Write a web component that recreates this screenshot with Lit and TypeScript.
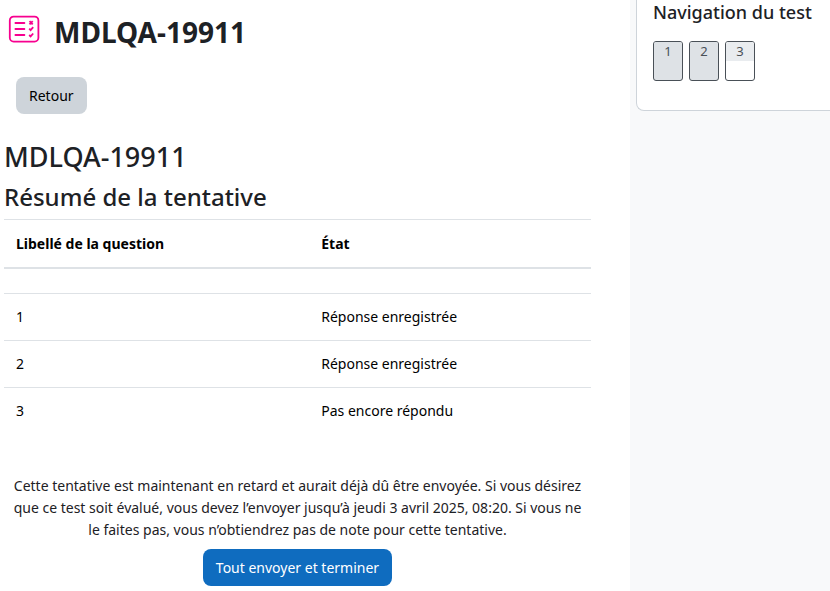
import { LitElement, html, css } from "lit";
import { customElement, state } from "lit/decorators.js";
import { classMap } from "lit/directives/class-map.js";

interface Question {
  number: number;
  answered: boolean;
}

@customElement("app-root")
export class AppRoot extends LitElement {
  static styles = css`
    :host {
      display: block;
      font-family: "Noto Sans", "Open Sans", sans-serif;
      font-size: 14px;
      line-height: 22px;
      color: #1d2125;
    }
    * {
      box-sizing: border-box;
    }
    .page {
      display: grid;
      grid-template-columns: minmax(0, 1fr) 200px;
      min-height: 100vh;
      background: #fff;
    }
    .main {
      padding: 12px 39px 5px 4px;
    }
    .title-bar {
      display: flex;
      align-items: center;
      gap: 14px;
      padding-left: 4px;
    }
    .icon {
      width: 32px;
      height: 28px;
      flex: none;
      margin-bottom: 6px;
    }
    h1,
    h2,
    h3,
    p {
      margin: 0;
    }
    h1 {
      font-size: 28px;
      line-height: 40px;
      font-weight: 700;
    }
    .btn {
      font: inherit;
      height: 37px;
      padding: 0 13px;
      border: 0;
      border-radius: 8px;
      white-space: nowrap;
      cursor: pointer;
    }
    .back {
      display: block;
      margin: 25px 12px;
      background: #ced4da;
      color: #000;
    }
    h2 {
      font-size: 27px;
      line-height: 36px;
      font-weight: 500;
    }
    h3 {
      font-size: 24px;
      line-height: 32px;
      font-weight: 500;
      margin: 6px 0;
    }
    table {
      width: 100%;
      table-layout: fixed;
      border-collapse: separate;
      border-spacing: 0;
      color: #000;
    }
    th,
    td {
      padding: 0 12px;
      text-align: left;
      vertical-align: middle;
    }
    td {
      border-top: 1px solid #dee2e6;
      height: 47px;
    }
    th {
      height: 50px;
      border-top: 1px solid #dee2e6;
      border-bottom: 2px solid #dee2e6;
      font-weight: 700;
    }
    .first {
      width: 52%;
    }
    .spacer td {
      height: 24px;
      border-top: 0;
    }
    .submit {
      display: flex;
      flex-direction: column;
      align-items: center;
      gap: 8px;
      margin-top: 41px;
      padding: 0 4px;
      text-align: center;
    }
    .primary {
      background: #0f6cbf;
      color: #fff;
    }
    .side {
      background: #f8f9fa;
      padding-left: 6px;
    }
    .card {
      padding: 0 0 29px 16px;
      background: #fff;
      border: 1px solid #ced4da;
      border-width: 0 0 1px 1px;
      border-bottom-left-radius: 8px;
    }
    .card h2 {
      font-size: 18px;
      line-height: 25px;
      white-space: nowrap;
    }
    .questions {
      display: flex;
      gap: 6px;
      margin-top: 16px;
    }
    .question {
      width: 30px;
      height: 40px;
      border: 1px solid #495057;
      border-radius: 3px;
      overflow: hidden;
      background: #fff;
      color: #495057;
      font-size: 13px;
      line-height: 19px;
      text-align: center;
      text-decoration: none;
    }
    .number {
      display: block;
      height: 19px;
      background: #e9ecef;
    }
    .answered,
    .answered .number {
      background: #dee2e6;
    }
  `;

  @state()
  private questions: Question[] = [
    { number: 1, answered: true },
    { number: 2, answered: true },
    { number: 3, answered: false },
  ];

  render() {
    return html`
      <div class="page">
        <main class="main">
          <header class="title-bar">
            <svg class="icon" viewBox="0 0 32 28" fill="none" stroke="#f7008f" aria-hidden="true">
              <rect x="1.8" y="1.6" width="28.6" height="25" rx="3.8" stroke-width="1.8" />
              <path d="M7.4 8h9M7.4 14h9M7.4 20h9" stroke-width="1.8" stroke-linecap="round" />
              <path d="M21.5 6.2l3.2 3.2M24.7 6.2l-3.2 3.2" stroke-width="1.9" />
              <path d="M21.2 13.7l1.4 1.4 2.6-2.9M21.2 20l1.4 1.4 2.6-2.9" stroke-width="1.8" />
            </svg>
            <h1>MDLQA-19911</h1>
          </header>
          <button class="btn back" type="button">Retour</button>
          <h2>MDLQA-19911</h2>
          <h3>Résumé de la tentative</h3>
          <table>
            <thead>
              <tr>
                <th class="first" scope="col">Libellé de la question</th>
                <th scope="col">État</th>
              </tr>
            </thead>
            <tbody>
              <tr class="spacer"><td colspan="2"></td></tr>
              ${this.questions.map(
                (q) => html`<tr>
                  <td>${q.number}</td>
                  <td>${q.answered ? "Réponse enregistrée" : "Pas encore répondu"}</td>
                </tr>`
              )}
            </tbody>
          </table>
          <section class="submit">
            <p>
              Cette tentative est maintenant en retard et aurait déjà dû être envoyée. Si vous désirez
              que ce test soit évalué, vous devez l’envoyer jusqu’à jeudi 3 avril 2025, 08:20. Si vous ne
              le faites pas, vous n’obtiendrez pas de note pour cette tentative.
            </p>
            <button class="btn primary" type="button">Tout envoyer et terminer</button>
          </section>
        </main>
        <aside class="side">
          <section class="card">
            <h2>Navigation du test</h2>
            <nav class="questions" aria-label="Navigation du test">
              ${this.questions.map(
                (q) => html`<a
                  href="#question-${q.number}"
                  class=${classMap({ question: true, answered: q.answered })}
                  ><span class="number">${q.number}</span></a
                >`
              )}
            </nav>
          </section>
        </aside>
      </div>
    `;
  }
}
